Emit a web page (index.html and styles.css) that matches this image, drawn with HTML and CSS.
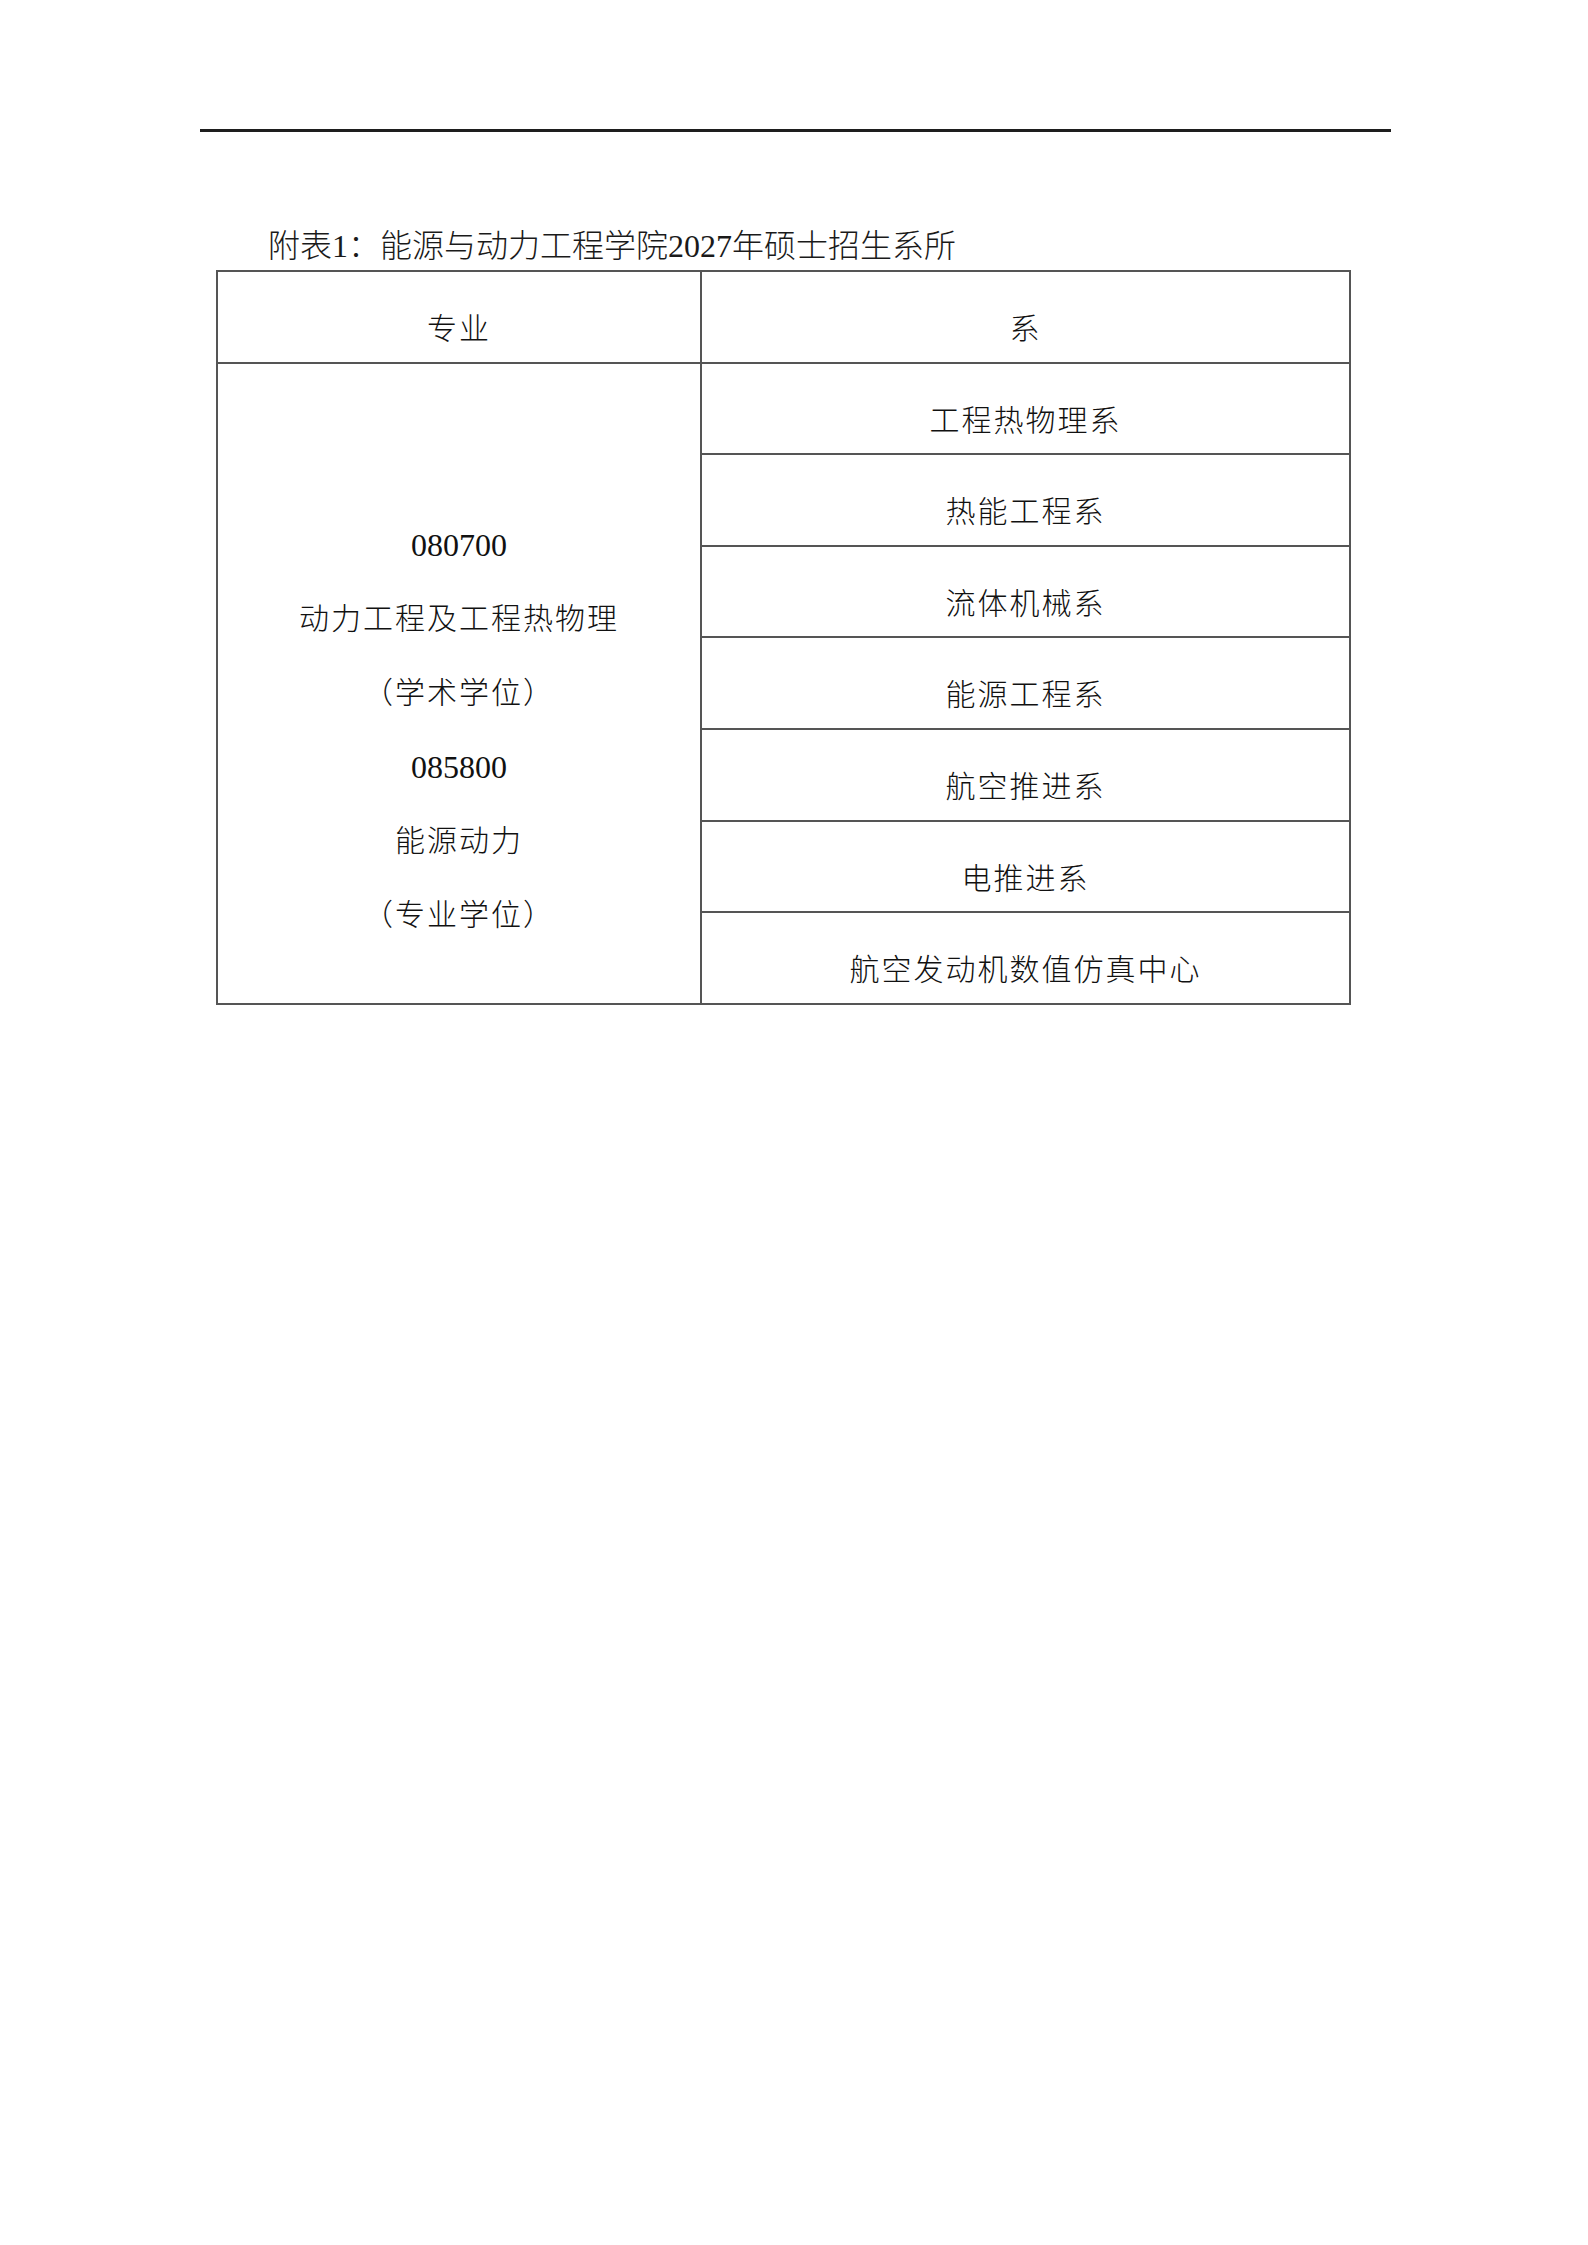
FILE: index.html
```html
<!DOCTYPE html>
<html lang="zh-CN">
<head>
<meta charset="utf-8">
<title>附表1</title>
<link rel="stylesheet" href="styles.css">
</head>
<body>
<div class="page">
  <div class="rule"></div>
  <p class="caption">附表1：能源与动力工程学院2027年硕士招生系所</p>
  <table class="grid">
    <colgroup>
      <col class="col-major">
      <col class="col-dept">
    </colgroup>
    <thead>
      <tr>
        <th>专业</th>
        <th>系</th>
      </tr>
    </thead>
    <tbody>
      <tr>
        <td class="major" rowspan="7">
          <div class="line num">080700</div>
          <div class="line">动力工程及工程热物理</div>
          <div class="line">（学术学位）</div>
          <div class="line num">085800</div>
          <div class="line">能源动力</div>
          <div class="line">（专业学位）</div>
        </td>
        <td>工程热物理系</td>
      </tr>
      <tr><td>热能工程系</td></tr>
      <tr><td>流体机械系</td></tr>
      <tr><td>能源工程系</td></tr>
      <tr><td>航空推进系</td></tr>
      <tr><td>电推进系</td></tr>
      <tr><td>航空发动机数值仿真中心</td></tr>
    </tbody>
  </table>
</div>
</body>
</html>
```

FILE: styles.css
```css
html, body {
  margin: 0;
  padding: 0;
  background: #ffffff;
}

body {
  font-family: "Liberation Serif", "Noto Sans CJK SC", serif;
  color: #111111;
}

.page {
  padding-top: 129px;
}

.rule {
  margin-left: 200px;
  width: 1191px;
  height: 3px;
  background: #1e1e1e;
}

.caption {
  margin: 94px 0 0 268px;
  font-size: 32px;
  line-height: 40px;
  height: 40px;
  font-weight: 300;
  color: #1a1a1a;
}

.grid {
  margin: 4px 0 0 216px;
  border-collapse: collapse;
  width: 1133px;
  table-layout: fixed;
}

.col-major { width: 484px; }
.col-dept { width: 649px; }

.grid th,
.grid td {
  border: 2px solid #555555;
  padding: 41px 0 16.6px 0;
  font-size: 30px;
  line-height: 32px;
  font-weight: 300;
  letter-spacing: 2px;
  text-align: center;
  vertical-align: top;
}

.grid td.major {
  padding-top: 144px;
  padding-bottom: 0;
}

.major .line {
  line-height: 74px;
  height: 74px;
}

.major .num {
  font-size: 32px;
  letter-spacing: 0;
}
```
